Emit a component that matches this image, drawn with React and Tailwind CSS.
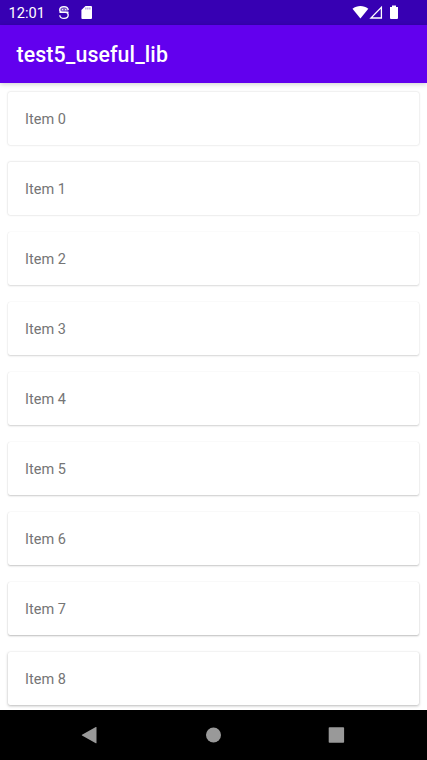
const items = [
  { label: "Item 0", shadow: "shadow-[0_0px_2px_rgba(0,0,0,0.22)]" },
  { label: "Item 1", shadow: "shadow-[0_0px_2px_rgba(0,0,0,0.24)]" },
  { label: "Item 2", shadow: "shadow-[0_0px_1px_rgba(0,0,0,0.12),0_1px_2px_rgba(0,0,0,0.14)]" },
  { label: "Item 3", shadow: "shadow-[0_0px_1px_rgba(0,0,0,0.12),0_1px_2px_rgba(0,0,0,0.16)]" },
  { label: "Item 4", shadow: "shadow-[0_0px_1px_rgba(0,0,0,0.12),0_1px_2px_rgba(0,0,0,0.18)]" },
  { label: "Item 5", shadow: "shadow-[0_0px_1px_rgba(0,0,0,0.12),0_1px_2px_rgba(0,0,0,0.2)]" },
  { label: "Item 6", shadow: "shadow-[0_0px_1px_rgba(0,0,0,0.12),0_1px_2px_rgba(0,0,0,0.22)]" },
  { label: "Item 7", shadow: "shadow-[0_0px_1px_rgba(0,0,0,0.12),0_1px_2px_rgba(0,0,0,0.25)]" },
  { label: "Item 8", shadow: "shadow-[0_0px_1px_rgba(0,0,0,0.12),0_1px_3px_rgba(0,0,0,0.27)]" },
];

function StatusBar() {
  return (
    <div className="flex h-[25px] shrink-0 items-center bg-[#3700b3] pl-[8.5px] text-white">
      <span className="w-[49.5px] pt-px text-[14.6px] leading-[25px]">12:01</span>
      <svg className="h-[25px] w-[12px]" viewBox="0 0 12 25" fill="none" stroke="white" strokeWidth="1.3">
        <path fill="white" fillOpacity=".35" d="M10.2 10C10 7.8 8.5 6.7 6 6.7C3.5 6.7 1.7 8 1.7 9.9C1.7 11.5 2.8 12.3 4.5 12.3H10.5" />
        <path d="M1.5 12.3H7.5C9.3 12.3 10.2 13.3 10.2 15C10.2 17.2 8.5 18.4 6 18.4C3.6 18.4 2 17.2 1.8 15.2" />
        <path strokeWidth="1" d="M4 9.7H5.2M7 9.7H8.2" />
      </svg>
      <svg className="ml-[11px] h-[25px] w-[12px]" viewBox="0 0 12 25">
        <path fill="white" d="M4.5 6H10Q11 6 11 7V18Q11 19 10 19H1.3Q.4 19 .4 18V10.1Z" />
        <path stroke="#3700b3" strokeOpacity=".65" strokeWidth=".8" d="M4.9 7.5V9.5M6.9 7.5V9.5M8.9 7.5V9.5" />
      </svg>
      <div className="ml-auto flex pr-[27px]">
        <svg className="h-[25px] w-[48px]" viewBox="352 0 48 25">
          <path fill="white" d="M352.5 8.7C357.2 5.2 363.6 5.2 368.3 8.7L360.4 18.4Z" />
          <path fill="none" stroke="white" strokeWidth="1.3" d="M381.4 7.4V18H370.9Z" />
          <path fill="white" d="M392 5.6H396V7H398V18Q398 19 397 19H391Q390 19 390 18V7H392Z" />
        </svg>
      </div>
    </div>
  );
}

function NavigationBar() {
  return (
    <nav className="relative z-10 h-[50px] shrink-0 bg-black">
      <svg className="block h-[50px] w-[427px]" viewBox="0 0 427 50" fill="#999999">
        <path d="M96.5 17.3V33Q96.5 33.6 95.8 33.2L82 25.5Q81.5 25.1 82 24.8L95.8 17Q96.5 16.7 96.5 17.3Z" />
        <circle cx="213.5" cy="25" r="7.5" />
        <rect x="328.7" y="17.2" width="15.4" height="15.6" rx=".8" />
      </svg>
    </nav>
  );
}

export default function App() {
  return (
    <div className="flex h-[760px] w-[427px] flex-col overflow-hidden bg-white font-[Roboto,sans-serif]">
      <StatusBar />
      <header className="z-10 flex h-[58px] shrink-0 items-center bg-[#6200ee] pl-[16.5px] pt-[2px] shadow-[0_1px_5px_rgba(0,0,0,0.2)]">
        <h1 className="text-[21.3px] font-medium leading-[28px] tracking-[0.12px] text-white">test5_useful_lib</h1>
      </header>
      <main className="flex min-h-0 flex-1 flex-col gap-[17px] overflow-hidden px-2 pt-[9px]">
        {items.map(({ label, shadow }) => (
          <div key={label} className={`flex h-[53px] shrink-0 items-center rounded-[2px] bg-white pl-[17px] pt-[2px] ${shadow}`}>
            <span className="text-[14.5px] leading-5 text-[#757575]">{label}</span>
          </div>
        ))}
      </main>
      <NavigationBar />
    </div>
  );
}
